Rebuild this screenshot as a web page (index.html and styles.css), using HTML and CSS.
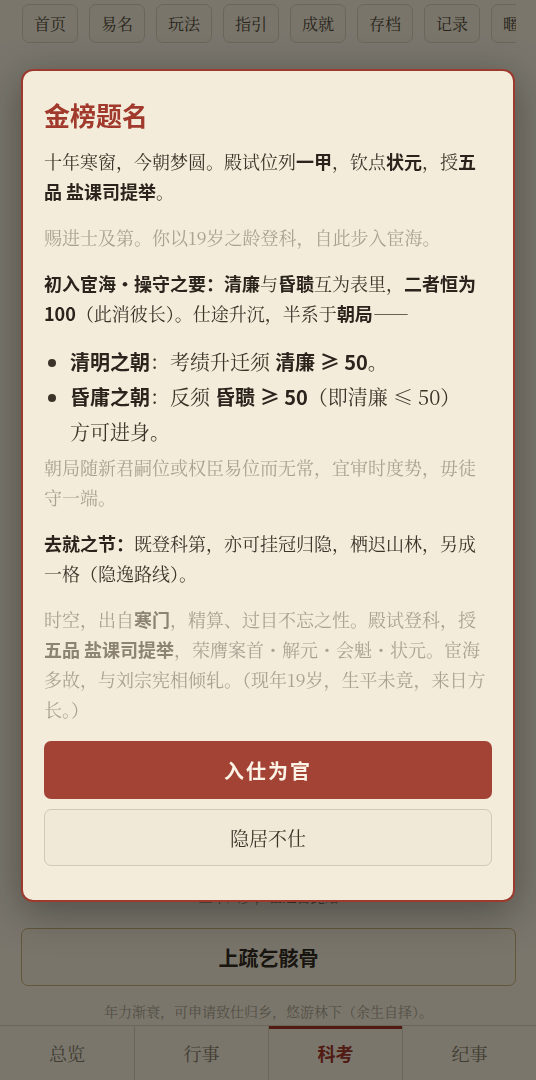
FILE: index.html
```html
<!DOCTYPE html>
<html lang="zh-CN">
<head>
<meta charset="utf-8">
<title>科考</title>
<link rel="stylesheet" href="styles.css">
</head>
<body>
<div class="app">
  <nav class="topnav">
    <button class="navbtn">首页</button>
    <button class="navbtn">易名</button>
    <button class="navbtn">玩法</button>
    <button class="navbtn">指引</button>
    <button class="navbtn">成就</button>
    <button class="navbtn">存档</button>
    <button class="navbtn">记录</button>
    <button class="navbtn">暱称</button>
  </nav>

  <main class="content">
    <p class="status">三十六岁，宦途自此始</p>
    <button class="retire">上疏乞骸骨</button>
    <p class="retire-note">年力渐衰，可申请致仕归乡，悠游林下（余生自择）。</p>
  </main>

  <footer class="tabbar">
    <div class="tab">总览</div>
    <div class="tab">行事</div>
    <div class="tab active">科考</div>
    <div class="tab">纪事</div>
  </footer>
</div>

<div class="overlay">
  <section class="dialog">
    <h2 class="dialog-title">金榜题名</h2>
    <p class="txt">十年寒窗，今朝梦圆。殿试位列<b>一甲</b>，钦点<b>状元</b>，授<b>五品 盐课司提举</b>。</p>
    <p class="txt muted">赐进士及第。你以19岁之龄登科，自此步入宦海。</p>
    <p class="txt"><b>初入宦海・操守之要：</b><b>清廉</b>与<b>昏聩</b>互为表里，<b>二者恒为100</b>（此消彼长）。仕途升沉，半系于<b>朝局</b>——</p>
    <ul class="rules">
      <li><b>清明之朝</b>：考绩升迁须 <b>清廉 ≥ 50</b>。</li>
      <li><b>昏庸之朝</b>：反须 <b>昏聩 ≥ 50</b>（即清廉 ≤ 50）方可进身。</li>
    </ul>
    <p class="txt muted">朝局随新君嗣位或权臣易位而无常，宜审时度势，毋徒守一端。</p>
    <p class="txt"><b>去就之节：</b>既登科第，亦可挂冠归隐，栖迟山林，另成一格（隐逸路线）。</p>
    <p class="txt muted">时空，出自<b>寒门</b>，精算、过目不忘之性。殿试登科，授<b>五品 盐课司提举</b>，荣膺案首・解元・会魁・状元。宦海多故，与刘宗宪相倾轧。（现年19岁，生平未竟，来日方长。）</p>
    <div class="actions">
      <button class="btn primary">入仕为官</button>
      <button class="btn ghost">隐居不仕</button>
    </div>
  </section>
</div>
</body>
</html>
```

FILE: styles.css
```css
* {
  box-sizing: border-box;
}

html,
body {
  margin: 0;
  height: 100%;
}

body {
  background: #f1e9d8;
  color: #3b3429;
  font-family: "Noto Serif CJK SC", "Noto Sans CJK SC", serif;
}

b {
  font-family: "Noto Sans CJK SC", sans-serif;
  font-weight: 700;
}

button {
  font-family: inherit;
  cursor: pointer;
}

.app {
  height: 100vh;
  display: flex;
  flex-direction: column;
}

/* top navigation strip */
.topnav {
  display: flex;
  gap: 11px;
  padding: 4px 0 0 22px;
  margin-right: 20px;
  overflow: hidden;
  flex: none;
}

.navbtn {
  flex: none;
  width: 56px;
  height: 39px;
  border: 1px solid #d4c9b2;
  border-radius: 7px;
  background: #efe7d5;
  color: #4a4236;
  font-size: 16px;
  padding: 0;
}

/* page body */
.content {
  flex: 1;
  display: flex;
  flex-direction: column;
  justify-content: flex-end;
  padding: 0 20px 0 21px;
}

.status {
  margin: 0 0 22px;
  text-align: center;
  font-size: 14px;
  color: #6b6254;
}

.retire {
  height: 58px;
  border: 1.5px solid #c2ab74;
  border-radius: 7px;
  background: #eee6d4;
  color: #2e281f;
  font-family: "Noto Sans CJK SC", sans-serif;
  font-weight: 700;
  font-size: 20px;
}

.retire-note {
  margin: 15px 0 4px;
  text-align: center;
  font-size: 14px;
  color: #a39a8a;
}

/* bottom tabs */
.tabbar {
  flex: none;
  display: grid;
  grid-template-columns: repeat(4, 1fr);
  height: 55px;
  border-top: 1px solid #d3c9b4;
  background: #f1e9d8;
}

.tab {
  display: flex;
  align-items: center;
  justify-content: center;
  font-size: 18px;
  color: #7d7465;
  border-left: 1px solid #d3c9b4;
}

.tab:first-child {
  border-left: none;
}

.tab.active {
  color: #9e3328;
  font-family: "Noto Sans CJK SC", sans-serif;
  font-weight: 700;
  box-shadow: inset 0 3px 0 #9e3328;
}

/* modal */
.overlay {
  position: fixed;
  top: 0;
  left: 0;
  width: 100%;
  height: 100%;
  background-color: rgba(4, 3, 0, 0.5);
  display: flex;
  justify-content: center;
  align-items: flex-start;
  padding-top: 69px;
}

.dialog {
  width: 494px;
  background: #f3ecdb;
  border: 2px solid #9d3a2e;
  border-radius: 12px;
  padding: 26px 21px 34px;
  box-shadow: 0 10px 40px rgba(0, 0, 0, 0.35);
}

.dialog-title {
  margin: 0 0 13px;
  font-family: "Noto Sans CJK SC", sans-serif;
  font-size: 26px;
  line-height: 36px;
  font-weight: 700;
  color: #a13a2d;
}

.txt {
  margin: 0 0 16px;
  font-size: 18px;
  line-height: 30px;
  color: #3b3429;
}

.txt b {
  color: #2a241c;
}

.txt.muted {
  color: #aaa192;
}

.txt.muted b {
  color: #8c8373;
}

.rules {
  margin: 0 0 3px;
  padding: 0 16px 0 26px;
  font-size: 20px;
  line-height: 35px;
  color: #3b3429;
}

.rules b {
  color: #2a241c;
}

.actions {
  display: flex;
  flex-direction: column;
  gap: 10px;
  padding-top: 1px;
}

.btn {
  height: 58px;
  border-radius: 7px;
  font-size: 19px;
}

.btn.primary {
  background: #a34335;
  border: none;
  color: #fbf3e6;
  font-family: "Noto Sans CJK SC", sans-serif;
  font-weight: 700;
  font-size: 20px;
  letter-spacing: 2px;
}

.btn.ghost {
  height: 57px;
  background: #f1e9d7;
  border: 1.5px solid #d2c8b3;
  color: #3b3429;
}
```
